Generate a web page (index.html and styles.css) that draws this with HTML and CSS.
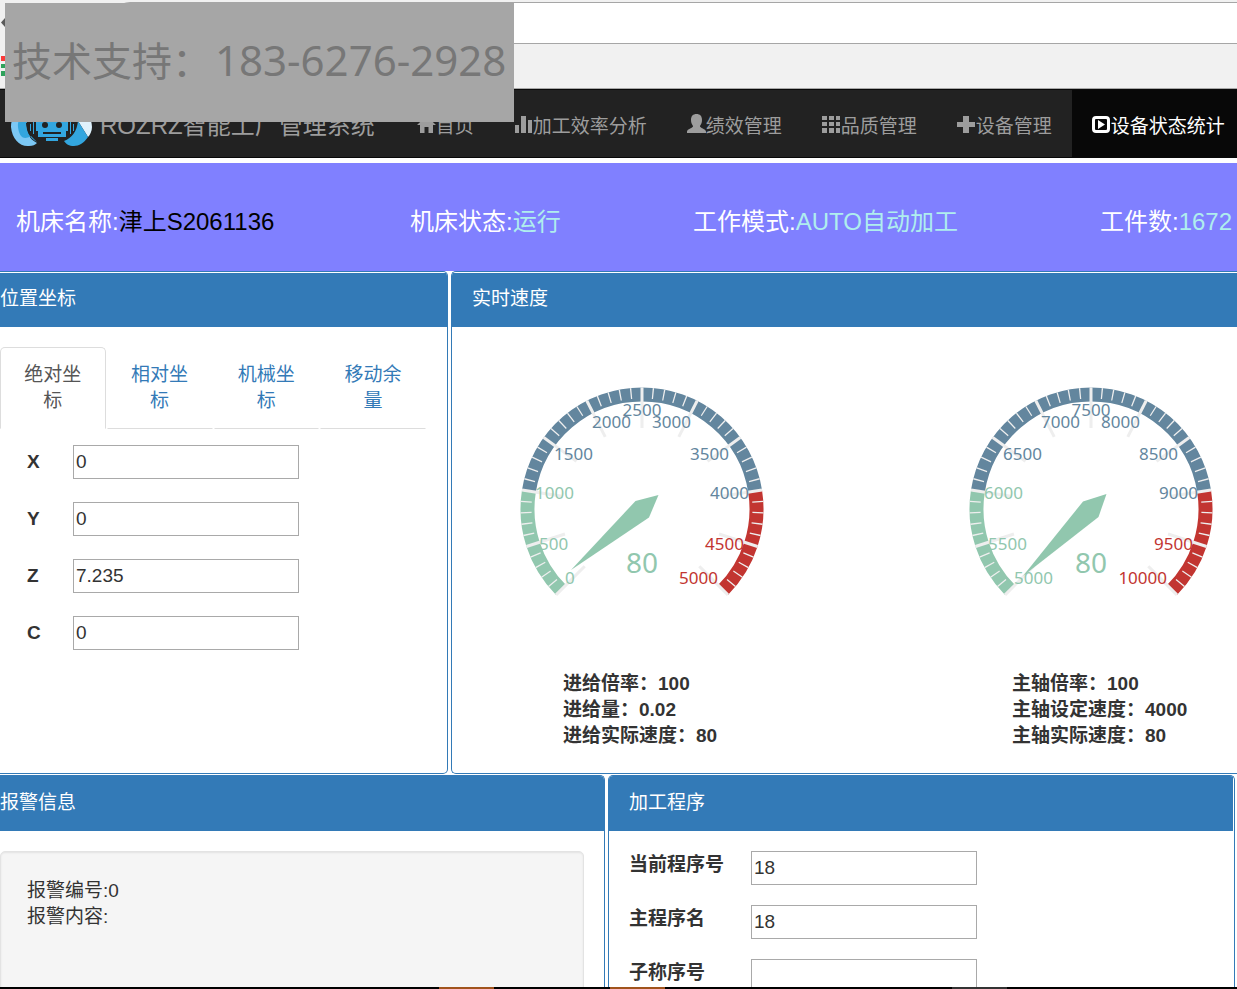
FILE: index.html
```
<!DOCTYPE html>
<html lang="zh-CN">
<head>
<meta charset="utf-8">
<title>ROZRZ智能工厂管理系统</title>
<link rel="stylesheet" href="styles.css">
</head>
<body>
<div class="page">
  <div class="chrome">
    <div class="chrome-address"></div>
    <svg class="chrome-icons" viewBox="0 0 8 88" aria-hidden="true">
      <path d="M1 22.500L5 18V27Z" fill="#5a5a5a"/>
      <path d="M1 56H8V61H1Z" fill="#fb3b3b"/>
      <path d="M1 64H8V68H1ZM1 71H8V76H1Z" fill="#2fa25c"/>
    </svg>
  </div>

  <nav class="navbar">
    <a class="brand" href="#">
      <svg class="logo" viewBox="0 0 82 50" aria-hidden="true">
        <path d="M41 2C20 2 0 12 0 30C1 42 9 50 18 49C22 49 24 48 26 46C18 42 15 35 15 26Z" fill="#7cc8f5"/>
        <path d="M41 2C20 6 6 18 7 30C8 39 12 44 20 39L26 45C18 41 15 33 15 26Z" fill="#33a6df"/>
        <path d="M41 2C62 2 81 12 81 30C81 34 79 38 77 40L67 24Z" fill="#dff1fc"/>
        <path d="M67 24L77 40C73 46 68 49 63 49C58 49 55 47 53 44C61 41 66 34 67 24Z" fill="#33a6df"/>
        <path d="M27 18H55V24H57V34H55V40H27V34H25V24H27Z" fill="#33a6df"/>
        <path d="M22 24H23V37H22ZM59 24H60V37H59ZM62 27H63V34H62ZM19 27H20V34H19ZM35 41H47V44H35Z" fill="#33a6df"/>
        <circle cx="34" cy="28" r="3" fill="#222"/><circle cx="48" cy="28" r="3" fill="#222"/>
        <path d="M32 35H50V37H32Z" fill="#222"/>
      </svg>
      <span>ROZRZ智能工厂管理系统</span>
    </a>
    <a class="nav-item" href="#"><svg class="icon" viewBox="0 0 19 19"><path d="M9.500 1L19 10H16V18H11.500V12H7.500V18H3V10H0L9.500 1Z"/></svg>首页</a>
    <a class="nav-item" href="#"><svg class="icon" viewBox="0 0 19 19"><path d="M1 10H5V18H1V10ZM7 1H12V18H7ZM14 5H18V18H14Z"/></svg>加工效率分析</a>
    <a class="nav-item" href="#"><svg class="icon" viewBox="0 0 19 19"><path d="M9.500 -1C13 -1 15 1 15 5C15 8 14 9 13 11C12.500 13 19 14 19 16.500V18H0V16.500C0 14 6.500 13 6 11C5 9 4 8 4 5C4 1 6 -1 9.500 -1Z"/></svg>绩效管理</a>
    <a class="nav-item" href="#"><svg class="icon" viewBox="0 0 19 19"><path d="M0 1H5V5H0ZM7 1H12V5H7ZM14 1H18V5H14ZM0 7H5V11H0ZM7 7H12V11H7ZM14 7H18V11H14ZM0 13H5V18H0ZM7 13H12V18H7ZM14 13H18V18H14Z"/></svg>品质管理</a>
    <a class="nav-item" href="#"><svg class="icon" viewBox="0 0 19 19"><path d="M6 1H12V7H18V12H12V18H6V12H0V7H6Z"/></svg>设备管理</a>
    <a class="nav-item active" href="#"><svg class="icon" viewBox="0 0 19 19"><path fill-rule="evenodd" d="M4 1H14Q18 1 18 5V14Q18 18 14 18H4Q0 18 0 14V5Q0 1 4 1ZM4 4Q3 4 3 5V14Q3 15 4 15H14Q15 15 15 14V5Q15 4 14 4ZM6 5L13 9.500L6 14Z"/></svg>设备状态统计</a>
  </nav>

  <section class="status">
    <p>机床名称:<span class="machine">津上S2061136</span></p>
    <p>机床状态:<span class="value">运行</span></p>
    <p>工作模式:<span class="value">AUTO自动加工</span></p>
    <p>工件数:<span class="value">1672</span></p>
  </section>

  <main class="board">
    <div class="row row-top">
      <section class="panel panel-left">
        <h2 class="panel-head">位置坐标</h2>
        <div class="tabs" role="tablist">
          <a class="tab selected" role="tab" href="#">绝对坐标</a>
          <a class="tab" role="tab" href="#">相对坐标</a>
          <a class="tab" role="tab" href="#">机械坐标</a>
          <a class="tab" role="tab" href="#">移动余量</a>
        </div>
        <form class="axes">
          <label for="x">X</label><input id="x" type="text" value="0">
          <label for="y">Y</label><input id="y" type="text" value="0">
          <label for="z">Z</label><input id="z" type="text" value="7.235">
          <label for="c">C</label><input id="c" type="text" value="0">
        </form>
      </section>

      <section class="panel panel-open">
        <h2 class="panel-head">实时速度</h2>
        <div class="gauges">
          <figure class="gauge">
            <svg class="dial" viewBox="-122 -122 244 220">
              <defs>
                <g id="scale">
                  <g fill="none" stroke-width="14">
                    <path stroke="#91c7ae" d="M-81 81A114.500 114.500 0 0 1 -113.100 -17.900"/>
                    <path stroke="#63869e" d="M-113.100 -17.900A114.500 114.500 0 0 1 113.100 -17.900"/>
                    <path stroke="#c23531" d="M113.100 -17.900A114.500 114.500 0 0 1 81 81"/>
                  </g>
                  <path fill="none" stroke="#eee" stroke-width="11" pathLength="500" stroke-dasharray="1.200 8.800" stroke-dashoffset="0.600" d="M-82 82A116 116 0 1 1 82 82"/>
                  <g stroke="#eee" stroke-width="3">
                    <path d="M0 -121.500V-81"/>
                    <path d="M0 -121.500V-81" transform="rotate(27)"/>
                    <path d="M0 -121.500V-81" transform="rotate(54)"/>
                    <path d="M0 -121.500V-81" transform="rotate(81)"/>
                    <path d="M0 -121.500V-81" transform="rotate(108)"/>
                    <path d="M0 -121.500V-81" transform="rotate(135)"/>
                    <path d="M0 -121.500V-81" transform="rotate(-27)"/>
                    <path d="M0 -121.500V-81" transform="rotate(-54)"/>
                    <path d="M0 -121.500V-81" transform="rotate(-81)"/>
                    <path d="M0 -121.500V-81" transform="rotate(-108)"/>
                    <path d="M0 -121.500V-81" transform="rotate(-135)"/>
                  </g>
                </g>
              </defs>
              <use href="#scale"/>
              <g class="low"><text x="-77" y="75">0</text><text x="-103" y="41">500</text><text x="-107" y="-10">1000</text></g>
              <g class="mid"><text x="-88" y="-49">1500</text><text x="-50" y="-81">2000</text></g>
              <g class="mid center"><text x="0" y="-93">2500</text></g>
              <g class="mid end"><text x="49" y="-81">3000</text><text x="87" y="-49">3500</text><text x="107" y="-10">4000</text></g>
              <g class="high end"><text x="102" y="41">4500</text><text x="76" y="75">5000</text></g>
              <path fill="#91c7ae" d="M-71 61L-6.500 -8L16.500 -14L7 8.500Z"/>
              <g class="low center reading"><text x="0" y="64">80</text></g>
            </svg>
            <figcaption>进给倍率：100<br>进给量：0.02<br>进给实际速度：80</figcaption>
          </figure>
          <figure class="gauge">
            <svg class="dial" viewBox="-122 -122 244 220">
              <use href="#scale"/>
              <g class="low"><text x="-77" y="75">5000</text><text x="-103" y="41">5500</text><text x="-107" y="-10">6000</text></g>
              <g class="mid"><text x="-88" y="-49">6500</text><text x="-50" y="-81">7000</text></g>
              <g class="mid center"><text x="0" y="-93">7500</text></g>
              <g class="mid end"><text x="49" y="-81">8000</text><text x="87" y="-49">8500</text><text x="107" y="-10">9000</text></g>
              <g class="high end"><text x="102" y="41">9500</text><text x="76" y="75">10000</text></g>
              <path fill="#91c7ae" d="M-68 67L-8 -7.500L15.500 -15L7.500 8Z"/>
              <g class="low center reading"><text x="0" y="64">80</text></g>
            </svg>
            <figcaption>主轴倍率：100<br>主轴设定速度：4000<br>主轴实际速度：80</figcaption>
          </figure>
        </div>
      </section>
    </div>

    <div class="row row-bottom">
      <section class="panel panel-left panel-tall">
        <h2 class="panel-head">报警信息</h2>
        <div class="well">报警编号:0<br>报警内容:</div>
      </section>
      <section class="panel panel-tall panel-program">
        <h2 class="panel-head">加工程序</h2>
        <form class="program">
          <label for="current">当前程序号</label><input id="current" type="text" value="18">
          <label for="main">主程序名</label><input id="main" type="text" value="18">
          <label for="sub">子称序号</label><input id="sub" type="text" value="">
        </form>
      </section>
    </div>
  </main>

  <div class="taskbar"><span class="task"></span><span class="task"></span><span class="task idle"></span></div>
  <div class="support">技术支持：<span class="phone">183-6276-2928</span></div>
</div>
</body>
</html>
```
FILE: styles.css
```
* { box-sizing: border-box; }

body {
  margin: 0;
  color: #333;
  background: #fff;
  font: 19px/26px "Liberation Sans", "Noto Sans CJK SC", sans-serif;
}

a { text-decoration: none; }
h2, p, figure { margin: 0; font-weight: normal; }

.page {
  position: relative;
  display: flex;
  flex-direction: column;
  height: 100vh;
  overflow: hidden;
}

/* browser strip */
.chrome {
  position: relative;
  flex: none;
  height: 89px;
  padding: 2px 0 0 110px;
  background: #f1f1f1;
  border-bottom: 1px solid #a8a8a8;
}
.chrome-address {
  height: 42px;
  background: #fff;
  border: solid #a6a6a6;
  border-width: 1px 0 1px 1px;
  border-radius: 20px 0 0 20px;
}
.chrome-icons {
  position: absolute;
  left: 0;
  top: 0;
  width: 8px;
  height: 88px;
}

/* navigation */
.navbar {
  display: flex;
  flex: none;
  height: 69px;
  padding-left: 11px;
  background: #222;
  border: solid #080808;
  border-width: 1px 0;
  white-space: nowrap;
  overflow: hidden;
}
.brand {
  display: flex;
  align-items: center;
  gap: 7px;
  padding-right: 22px;
  color: #9d9d9d;
  font-size: 24px;
}
.logo { width: 82px; height: 50px; margin-top: -4px; }
.brand span { padding-top: 4px; }
.nav-item {
  display: flex;
  align-items: center;
  padding: 6px 20px 0;
  color: #9d9d9d;
}
.nav-item.active { background: #080808; color: #fff; }
.icon { width: 19px; height: 19px; margin-top: -4px; fill: currentColor; overflow: visible; }

/* machine status */
.status {
  display: grid;
  grid-template-columns: 394fr 283fr 407fr 137fr;
  align-items: center;
  flex: none;
  height: 108px;
  margin-top: 5px;
  padding: 9px 0 0 16px;
  background: #8080ff;
  color: #fff;
  font-size: 24px;
  white-space: nowrap;
}
.machine { color: #000; }
.value { color: #afeeee; }

/* panels */
.board { display: flex; flex: 1; flex-direction: column; gap: 1px; min-height: 0; }
.row { display: grid; gap: 3px; }
.row-top { grid-template-columns: 448fr 786fr; flex: none; }
.row-bottom { grid-template-columns: 605fr 627fr; flex: 1; min-height: 0; padding-right: 2px; }
.panel {
  min-width: 0;
  padding-top: 1px;
  border: 1px solid #337ab7;
  border-radius: 5px;
  overflow: hidden;
}
.panel-left {
  border-left: 0;
  border-top-left-radius: 0;
  border-bottom-left-radius: 0;
}
.panel-open {
  border-right: 0;
  border-top-right-radius: 0;
  border-bottom-right-radius: 0;
}
.panel-tall {
  padding-top: 0;
  border-bottom: 0;
  border-bottom-left-radius: 0;
  border-bottom-right-radius: 0;
}
.panel-program { padding-right: 1px; }
.panel-head {
  padding: 13px 20px 15px;
  background: #337ab7;
  color: #fff;
  font-size: 19px;
}
.panel-tall .panel-head { padding-top: 14px; }
.panel-left .panel-head { padding-left: 0; }

.tabs {
  display: grid;
  grid-template-columns: repeat(4, 1fr);
  gap: 1px;
  margin: 20px 21px 0 0;
}
.tab {
  padding: 14px 20px;
  border: 1px solid transparent;
  border-bottom-color: #ddd;
  color: #337ab7;
  text-align: center;
}
.tab.selected {
  border-color: #ddd #ddd transparent;
  border-radius: 5px 5px 0 0;
  color: #555;
}

input {
  width: 226px;
  height: 34px;
  padding: 0 2px;
  border: 1px solid #a9a9a9;
  background: #fff;
  color: #333;
  font: inherit;
}
label { font-weight: bold; }
.axes {
  display: grid;
  grid-template-columns: 46px 226px;
  align-items: center;
  row-gap: 23px;
  padding: 16px 0 0 27px;
}
.program {
  display: grid;
  grid-template-columns: 122px 226px;
  row-gap: 20px;
  padding: 20px;
}
.program label { padding-top: 1px; }

.gauges {
  display: grid;
  grid-template-columns: 449fr 268fr;
  padding: 60px 0 24px 68px;
}
.gauge { width: 244px; white-space: nowrap; }
.dial { display: block; width: 244px; height: 220px; }
.dial text { font: 17px "Noto Sans", sans-serif; }
.dial .reading text { font-size: 28px; }
.low { fill: #91c7ae; }
.mid { fill: #63869e; }
.high { fill: #c23531; }
.center { text-anchor: middle; }
.end { text-anchor: end; }
.gauge figcaption { padding: 64px 0 0 43px; font-weight: bold; }

.well {
  height: 300px;
  margin: 20px 20px 0 0;
  padding: 26px;
  background: #f5f5f5;
  border: 1px solid #e3e3e3;
  border-radius: 5px;
  box-shadow: inset 0 1px 2px rgba(0, 0, 0, 0.08);
}

.taskbar {
  display: flex;
  flex: none;
  gap: 116px;
  height: 2px;
  padding-left: 439px;
  background: #000;
}
.task { width: 55px; background: #a0531c; }
.task.idle { margin-left: 171px; background: #333; }

/* support notice lies over the page */
.support {
  position: absolute;
  left: 5px;
  top: 3px;
  padding: 28px 8px 31px 7px;
  background: #a6a6a6;
  color: #777;
  font: 40px/60px "Noto Sans", "Noto Sans CJK SC", sans-serif;
  white-space: nowrap;
}
.phone { padding-left: 3px; font-size: 42px; line-height: 40px; }
```
